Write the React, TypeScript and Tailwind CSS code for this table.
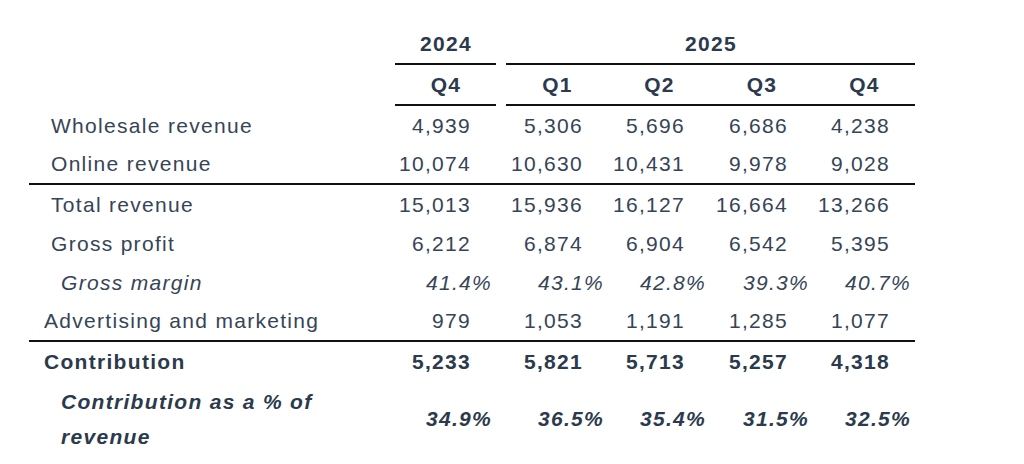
// Quarterly revenue & contribution table

type Row = {
  label: string;
  values: string[];
  indent: string;
  kind: 'num' | 'pct' | 'bold' | 'boldPct';
  height: string;
  borderBottom?: boolean;
};

const rows: Row[] = [
  { label: 'Wholesale revenue', values: ['4,939', '5,306', '5,696', '6,686', '4,238'], indent: 'pl-[22px]', kind: 'num', height: 'h-[39px]' },
  { label: 'Online revenue', values: ['10,074', '10,630', '10,431', '9,978', '9,028'], indent: 'pl-[22px]', kind: 'num', height: 'h-[38px]', borderBottom: true },
  { label: 'Total revenue', values: ['15,013', '15,936', '16,127', '16,664', '13,266'], indent: 'pl-[22px]', kind: 'num', height: 'h-[39px]' },
  { label: 'Gross profit', values: ['6,212', '6,874', '6,904', '6,542', '5,395'], indent: 'pl-[22px]', kind: 'num', height: 'h-[39px]' },
  { label: 'Gross margin', values: ['41.4%', '43.1%', '42.8%', '39.3%', '40.7%'], indent: 'pl-[32px]', kind: 'pct', height: 'h-[39px]' },
  { label: 'Advertising and marketing', values: ['979', '1,053', '1,191', '1,285', '1,077'], indent: 'pl-[15px]', kind: 'num', height: 'h-[38px]', borderBottom: true },
  { label: 'Contribution', values: ['5,233', '5,821', '5,713', '5,257', '4,318'], indent: 'pl-[15px]', kind: 'bold', height: 'h-[39px]' },
];

const colWidths = ['w-[101px]', 'w-[102px]', 'w-[102px]', 'w-[103px]', 'w-[102px]'];

function Cells({ values, kind }: { values: string[]; kind: Row['kind'] }) {
  const pad = kind === 'pct' || kind === 'boldPct' ? 'pr-[4px]' : 'pr-[25px]';
  const style =
    kind === 'pct'
      ? 'italic'
      : kind === 'bold'
        ? 'font-bold text-[#2b3a4c]'
        : kind === 'boldPct'
          ? 'font-bold italic text-[#2b3a4c]'
          : '';
  return (
    <>
      {values.map((v, i) => (
        <div key={i} className={`flex ${i === 0 ? 'mr-[10px]' : ''}`}>
          <div className={`${colWidths[i]} ${pad} ${style} text-right`}>{v}</div>
        </div>
      ))}
    </>
  );
}

export default function App() {
  return (
    <div
      className="w-[1024px] h-[464px] bg-white text-[#364457] text-[21px] tracking-[1.3px] overflow-hidden"
      style={{ fontFamily: '"Liberation Sans", Arial, sans-serif' }}
    >
      <div className="ml-[29px] pt-[24px] w-[886px]">
        {/* year header */}
        <div className="flex h-[41px] font-bold text-[#2b3a4c]">
          <div className="w-[366px]" />
          <div className="w-[101px] pl-[1px] border-b-2 border-[#111] flex items-center justify-center">2024</div>
          <div className="w-[10px]" />
          <div className="w-[409px] pl-[1px] border-b-2 border-[#111] flex items-center justify-center">2025</div>
        </div>
        {/* quarter header */}
        <div className="flex h-[41px] font-bold text-[#2b3a4c]">
          <div className="w-[366px]" />
          <div className="w-[101px] pl-[1px] border-b-2 border-[#111] flex items-center justify-center">Q4</div>
          <div className="w-[10px]" />
          <div className="w-[409px] border-b-2 border-[#111] flex">
            {['Q1', 'Q2', 'Q3', 'Q4'].map((q, i) => (
              <div key={q} className={`${colWidths[i + 1]} pl-[1px] flex items-center justify-center`}>
                {q}
              </div>
            ))}
          </div>
        </div>

        {rows.map((r) => (
          <div
            key={r.label}
            className={`flex items-center ${r.height} ${r.borderBottom ? 'border-b-2 border-[#111] box-content' : ''}`}
          >
            <div
              className={`w-[366px] ${r.indent} ${r.kind === 'pct' ? 'italic' : ''} ${r.kind === 'bold' ? 'font-bold text-[#2b3a4c]' : ''}`}
            >
              {r.label}
            </div>
            <Cells values={r.values} kind={r.kind} />
          </div>
        ))}

        {/* contribution % row */}
        <div className="flex items-center h-[76px]">
          <div className="w-[366px] pl-[32px] pr-[40px] font-bold italic text-[#2b3a4c] leading-[35px]">
            Contribution as a % of revenue
          </div>
          <Cells values={['34.9%', '36.5%', '35.4%', '31.5%', '32.5%']} kind="boldPct" />
        </div>
      </div>
    </div>
  );
}
